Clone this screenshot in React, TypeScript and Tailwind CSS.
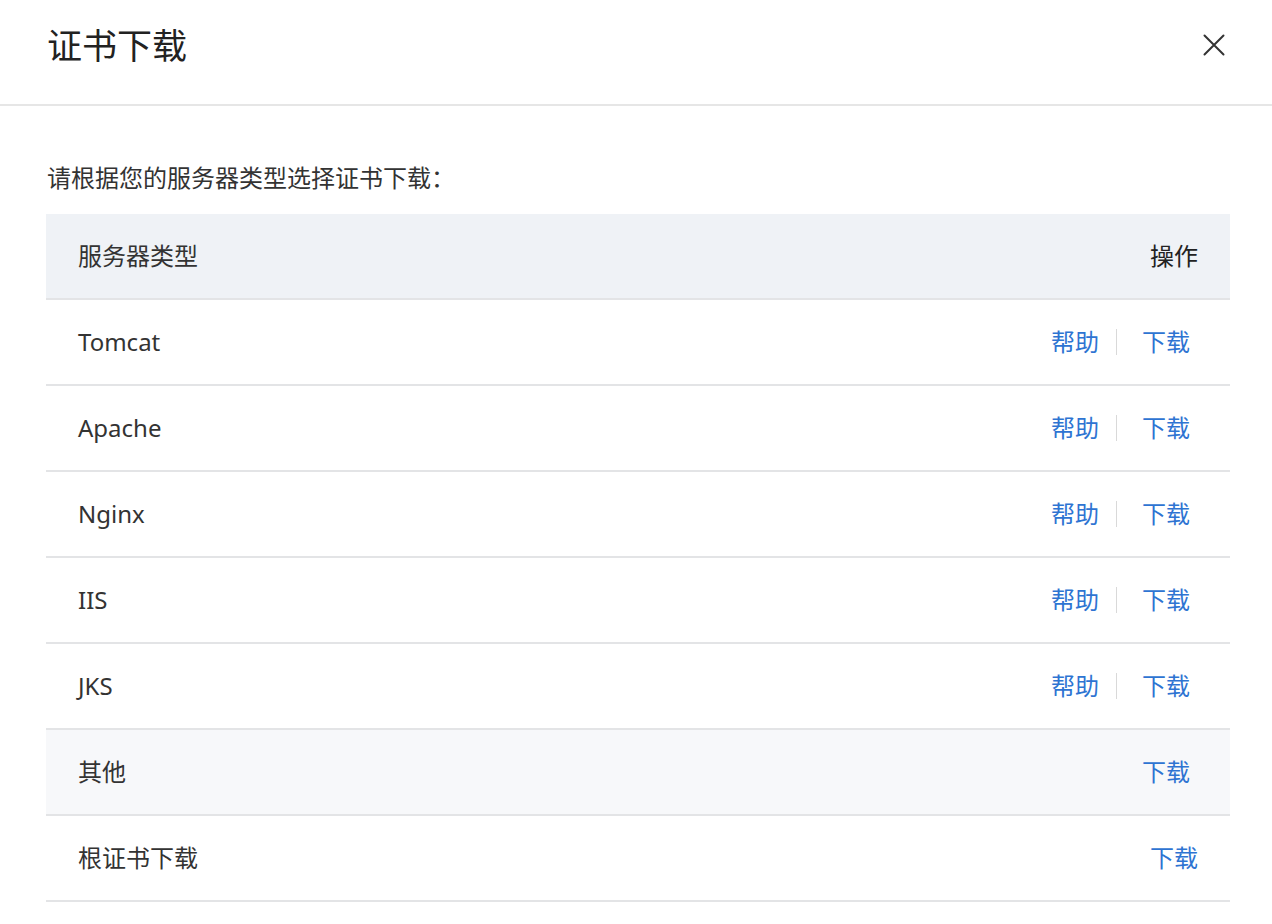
import React from "react";

type Row = {
  name: string;
  help: boolean;
  muted?: boolean;
  root?: boolean;
};

const rows: Row[] = [
  { name: "Tomcat", help: true },
  { name: "Apache", help: true },
  { name: "Nginx", help: true },
  { name: "IIS", help: true },
  { name: "JKS", help: true },
  { name: "其他", help: false, muted: true },
  { name: "根证书下载", help: false, root: true },
];

const font = {
  fontFamily: '"Noto Sans", "Noto Sans CJK SC", sans-serif',
};

const App = () => {
  return (
    <div className="w-[1272px] h-[924px] bg-white text-[#333]" style={font}>
      <div className="flex items-center justify-between h-[106px] pb-[14px] pl-[47px] pr-[46px] border-b-2 border-[#e6e6e6]">
        <p className="text-[35px] leading-none text-[#222]">证书下载</p>
        <button className="w-6 h-6 flex items-center justify-center text-[#333]">
          <svg width="22" height="22" viewBox="0 0 22 22" fill="none">
            <path
              d="M1.5 1.5 L20.5 20.5 M20.5 1.5 L1.5 20.5"
              stroke="currentColor"
              strokeWidth="2"
              strokeLinecap="round"
            />
          </svg>
        </button>
      </div>

      <div className="pl-[46px] pr-[42px] pt-[60px]">
        <p className="text-[24px] leading-none mb-[24px] pl-px">
          请根据您的服务器类型选择证书下载：
        </p>
        <div className="w-full">
          <div className="flex items-center justify-between h-[86px] px-[32px] bg-[#eff2f6] border-b-2 border-[#e3e4e6] text-[24px]">
            <span>服务器类型</span>
            <span className="text-[#222]">操作</span>
          </div>
          {rows.map((r) => (
            <div
              key={r.name}
              className={
                "flex items-center justify-between h-[86px] pl-[32px] border-b-2 border-[#e3e4e6] text-[24px] " +
                (r.muted ? "bg-[#f7f8fa] " : "") +
                (r.root ? "pr-[32px]" : "pr-[40px]")
              }
            >
              <span>{r.name}</span>
              <div className="flex items-center text-[#2e74d2]">
                {r.help && (
                  <>
                    <a href="#" className="leading-none">帮助</a>
                    <span className="w-px h-[26px] bg-[#d9d9d9] ml-[17px] mr-[25px]" />
                  </>
                )}
                <a href="#" className="leading-none">下载</a>
              </div>
            </div>
          ))}
        </div>
      </div>
    </div>
  );
};

export default App;
